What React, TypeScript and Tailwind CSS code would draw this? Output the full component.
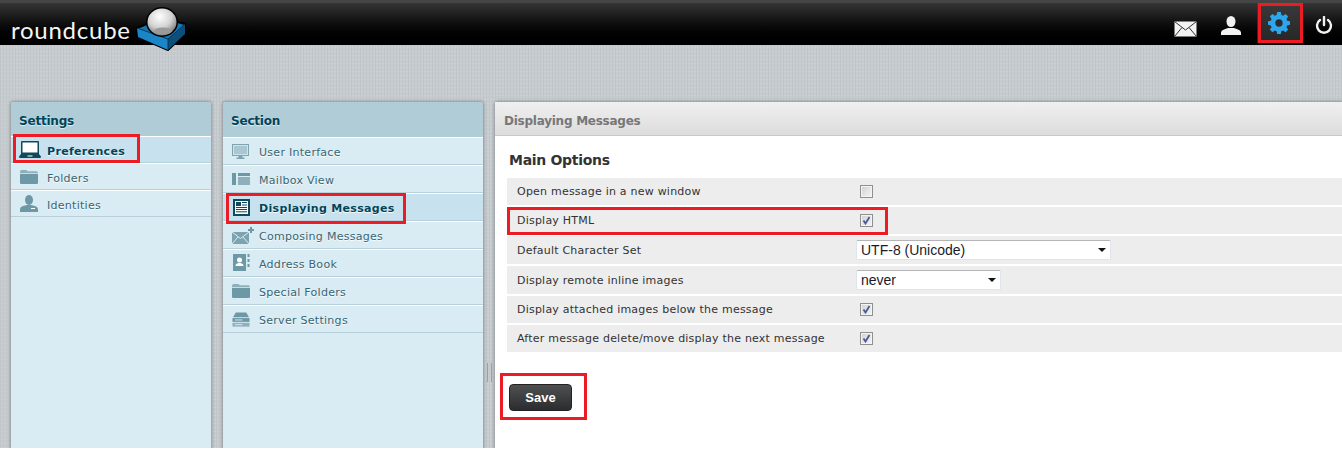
import React from 'react';

const verdana = "font-['DejaVu_Sans',sans-serif]";

const Folder: React.FC<{ className?: string }> = ({ className }) => (
    <svg width="18" height="14" viewBox="0 0 22 17" preserveAspectRatio="none" className={className}>
        <path d="M0 4V2Q0 0 2 0H8l1.500 1.500H20Q22 1.500 22 4Z" fill="#8fb0bb" />
        <path d="M0 5h22v10.500q0 1.500-1.500 1.500H1.500Q0 17 0 15.500Z" fill="#6d98a6" />
    </svg>
);

const settingsIcons: Record<string, React.ReactNode> = {
    Preferences: (
        <svg width="22" height="17" viewBox="0 0 22 17">
            <path d="M3 0h16q1 0 1 1v12H2V1q0-1 1-1Z" fill="#0f4a5c" />
            <rect x="3.500" y="1.500" width="15" height="10" fill="#fff" />
            <path d="M2 13h18l2 2.500q0 1.500-1 1.500H1q-1 0-1-1.500Z" fill="#0f4a5c" />
            <rect x="8.500" y="14.500" width="5" height="1" fill="#fff" />
        </svg>
    ),
    Folders: <Folder className="ml-[1px]" />,
    Identities: (
        <svg width="18" height="17" viewBox="0 0 18 17" className="ml-[1px]">
            <ellipse cx="9" cy="5" rx="4" ry="5" fill="#6d98a6" />
            <path d="M0 17v-3q0-2 3-3l4-1h4l4 1q3 1 3 3v3Z" fill="#6d98a6" />
            <rect x="11" y="13" width="4" height="1" fill="#fff" />
        </svg>
    ),
};

const sectionIcons: Record<string, React.ReactNode> = {
    'User Interface': (
        <svg width="17" height="15" viewBox="0 0 17 15">
            <rect x="0.500" y="0.500" width="16" height="11" fill="#cfe3ea" stroke="#7fa4b1" />
            <rect x="2" y="2" width="13" height="8" fill="#a9c6d1" />
            <path d="M6.500 12h4v1.500h2V15h-8v-1.500h2Z" fill="#7fa4b1" />
        </svg>
    ),
    'Mailbox View': (
        <svg width="18" height="12" viewBox="0 0 18 12">
            <rect x="0" y="0" width="4" height="12" fill="#6d98a6" />
            <rect x="6" y="0" width="12" height="3" fill="#6d98a6" />
            <rect x="6" y="4" width="12" height="8" fill="#8db0bc" />
        </svg>
    ),
    'Displaying Messages': (
        <svg width="17" height="17" viewBox="0 0 17 17" className="ml-[1px]">
            <rect width="17" height="17" fill="#0f4a5c" />
            <rect x="2" y="2" width="13" height="13" fill="#fff" />
            <rect x="3" y="3" width="5" height="4" fill="#0f4a5c" />
            <path d="M9 3.500h5M9 6h5M3 8.500h11M3 10.500h11M3 12.800h11" stroke="#0f4a5c" strokeWidth="1" />
        </svg>
    ),
    'Composing Messages': (
        <svg width="23" height="17" viewBox="0 0 23 17">
            <path d="M0 5h17v12H0Z" fill="#7ea3b0" />
            <path d="M0 5l8.500 6.500L17 5M0 17l6-7M17 17l-6-7" fill="none" stroke="#d9ebf3" strokeWidth="1" />
            <path d="M19 0v6M16 3h6" stroke="#6d98a6" strokeWidth="2" />
        </svg>
    ),
    'Address Book': (
        <svg width="17" height="18" viewBox="0 0 17 18" className="ml-[1px]">
            <rect width="13" height="17" fill="#6d98a6" />
            <circle cx="6.500" cy="6" r="2.500" fill="#fff" />
            <path d="M2.500 12q0-2.500 3-3h2q3 .5 3 3Z" fill="#fff" />
            <path d="M15.500 0v3M15.500 5v3M15.500 10v3" stroke="#6d98a6" strokeWidth="2" />
        </svg>
    ),
    'Special Folders': <Folder />,
    'Server Settings': (
        <svg width="18" height="15" viewBox="0 0 19 15">
            <path d="M4 0h11l3 5H1Z" fill="#6d98a6" />
            <rect x="0.500" y="6" width="18" height="4" fill="#6d98a6" />
            <rect x="0.500" y="11" width="18" height="4" fill="#8db0bc" />
            <path d="M3 8h8M3 13h8" stroke="#d9ebf3" strokeWidth="1" />
        </svg>
    ),
};

const MenuRow: React.FC<{ label: string; icon: React.ReactNode; selected?: boolean; height: string; iconBox: string; textPad: string }> = ({
    label,
    icon,
    selected,
    height,
    iconBox,
    textPad,
}) => (
    <div
        className={`flex items-center border-b border-b-[#b7d0da] border-t border-t-white ${height} ${
            selected ? 'bg-[#c7e2ee] font-bold tracking-[0.33px] text-[#004458]' : 'tracking-[0.28px] text-[#376572]'
        }`}
    >
        <div className={`flex w-[36px] shrink-0 items-center ${iconBox}`}>{icon}</div>
        <span className={`text-[11px] leading-none [text-shadow:0_1px_1px_#fff] ${textPad}`}>{label}</span>
    </div>
);

const Panel: React.FC<{ title: string; className: string; headerH: string; children: React.ReactNode }> = ({
    title,
    className,
    headerH,
    children,
}) => (
    <div className={`h-full shrink-0 rounded-t-[3px] bg-[#d9ebf3] shadow-[0_0_3px_1px_#8f9598] ${className}`}>
        <div
            className={`flex items-center rounded-t-[3px] bg-[#b0ccd7] pl-2 text-[12px] font-bold tracking-[-0.2px] text-[#004458] [text-shadow:0_1px_1px_#e4f0f5] ${headerH}`}
        >
            {title}
        </div>
        {children}
    </div>
);

const Checkbox: React.FC<{ checked?: boolean }> = ({ checked }) => (
    <div className="flex h-[13px] w-[13px] items-center justify-center border border-[#8e8f8f] bg-gradient-to-br from-[#d0d0d0] to-[#f6f6f6] shadow-[inset_0_0_0_1px_#f4f4f4]">
        {checked && (
            <svg width="9" height="9" viewBox="0 0 9 9">
                <path d="M1.500 4.500L3.500 7.500L7.500 1" fill="none" stroke="#4a5a94" strokeWidth="1.800" />
            </svg>
        )}
    </div>
);

const Select: React.FC<{ value: string; width: string }> = ({ value, width }) => (
    <div
        className={`flex h-[20px] items-center justify-between rounded-[2px] border border-t-[#b5b5b5] border-x-[#dfe3ea] border-b-[#dfe3ea] bg-white pl-[4px] pr-[3px] font-['Liberation_Sans',sans-serif] text-[14px] text-[#1a1a2a] ${width}`}
    >
        <span>{value}</span>
        <svg width="8" height="4" viewBox="0 0 8 4" className="mr-[1px]">
            <path d="M0 0h8L4 4Z" fill="#111" />
        </svg>
    </div>
);

const OptionRow: React.FC<{ label: string; height: string; children: React.ReactNode }> = ({ label, height, children }) => (
    <div className={`flex items-center bg-[#ededed] ${height}`}>
        <span className="w-[349px] shrink-0 pl-[10px] pt-[2px] text-[11px] tracking-[0.22px] text-[#333]">{label}</span>
        {children}
    </div>
);

const Logo: React.FC = () => (
    <div className="flex h-[42px] items-start self-start pl-[11px]">
        <span className="mt-[10px] w-[124px] shrink-0 font-['Lato',sans-serif] text-[24px] font-normal leading-[34px] tracking-[0.75px] text-[#f4f4f4]">
            roundcube
        </span>
        <svg width="52" height="50" viewBox="0 0 52 50" className="mt-[2px] shrink-0">
            <defs>
                <radialGradient id="ball" cx="0.42" cy="0.3" r="0.75">
                    <stop offset="0" stopColor="#ffffff" />
                    <stop offset="0.55" stopColor="#d2d2d2" />
                    <stop offset="1" stopColor="#6f6f6f" />
                </radialGradient>
            </defs>
            <path d="M2 23L27 13L50 19V29L33 45L3 32Z" fill="#1478b8" stroke="#000" strokeWidth="2" strokeLinejoin="round" />
            <path d="M2 23L33 34L33 45L3 32Z" fill="#1a86c8" />
            <path d="M33 34L50 19V29L33 45Z" fill="#0c4f7d" />
            <path d="M33 34L50 19M33 34V45M2 23L33 34" fill="none" stroke="#06263c" strokeWidth="0.800" />
            <ellipse cx="27" cy="17" rx="16" ry="15" fill="#000" />
            <ellipse cx="27" cy="17" rx="14.500" ry="13.500" fill="url(#ball)" />
            <ellipse cx="28" cy="26" rx="9" ry="3.500" fill="#9a9a9a" />
        </svg>
    </div>
);

const HeaderIcons: React.FC = () => (
    <div className="flex items-center self-start">
        <svg width="23" height="16" viewBox="0 0 23 16" className="mr-[24px] mt-[12px]">
            <rect x="0.500" y="0.500" width="22" height="15" fill="#f2f2f2" />
            <path d="M0.500 0.500L11.500 9L22.500 0.500M0.500 15.500L8 6.500M22.500 15.500L15 6.500" fill="none" stroke="#333" strokeWidth="1" />
        </svg>
        <svg width="20" height="19" viewBox="0 0 20 19" className="mr-[16px] mt-[4px]">
            <ellipse cx="10" cy="5.500" rx="4.500" ry="5.500" fill="#f2f2f2" />
            <path d="M0 19v-2.500q0-2 3-3l4-1.500h6l4 1.500q3 1 3 3V19Z" fill="#f2f2f2" />
        </svg>
        <div className="flex h-[40px] w-[45px] items-center justify-center bg-gradient-to-b from-[#3a3a3a] to-[#262626] pr-[2px]">
            <svg width="22" height="22" viewBox="0 0 24 24">
                <path
                    d="M10 0h4l.6 3.200 1.900.8 2.700-1.900 2.800 2.800-1.900 2.700.8 1.900L24 10v4l-3.100.6-.8 1.900 1.900 2.700-2.800 2.800-2.700-1.900-1.900.8L14 24h-4l-.6-3.100-1.900-.8-2.700 1.900L2 19.200l1.900-2.700-.8-1.900L0 14v-4l3.100-.5.8-1.900L2 4.900l2.800-2.800 2.700 1.900 1.900-.8Z"
                    fill="#2ea6ee"
                />
                <circle cx="12" cy="12" r="4" fill="#2c2c2c" />
            </svg>
        </div>
        <svg width="18" height="18" viewBox="0 0 18 18" className="ml-[13px] mr-[9px] mt-[3px]">
            <path d="M5 4a7 7 0 1 0 8 0" fill="none" stroke="#f2f2f2" strokeWidth="2.400" strokeLinecap="round" />
            <path d="M9 1v8" stroke="#f2f2f2" strokeWidth="2.400" strokeLinecap="round" />
        </svg>
    </div>
);

const App: React.FC = () => {
    const redBox = 'pointer-events-none absolute border-[3px] border-[#ed1c24]';

    return (
        <div className={`relative h-[460px] w-[1342px] overflow-hidden bg-white ${verdana}`}>
            <header className="relative z-10 flex h-[45px] items-center justify-between border-t-[3px] border-t-[#454545] bg-gradient-to-b from-[#353535] to-black">
                <Logo />
                <HeaderIcons />
            </header>

            <main className="flex h-[403px] gap-[12px] overflow-hidden bg-[#c5cbce] bg-[repeating-linear-gradient(90deg,#c0c6c9_0_1px,transparent_1px_3px),repeating-linear-gradient(0deg,#cbd1d4_0_1px,transparent_1px_4px)] pl-[11px] pt-[57px]">
                <Panel title="Settings" className="w-[200px]" headerH="h-[34px] pl-[8px] pt-[4px]">
                    {['Preferences', 'Folders', 'Identities'].map((name) => (
                        <MenuRow
                            key={name}
                            label={name}
                            icon={settingsIcons[name]}
                            selected={name === 'Preferences'}
                            height="h-[27px]"
                            iconBox="pl-[8px]"
                            textPad="pt-[4px]"
                        />
                    ))}
                </Panel>

                <Panel title="Section" className="w-[260px]" headerH="h-[35px] pt-[2px]">
                    {Object.keys(sectionIcons).map((name) => (
                        <MenuRow
                            key={name}
                            label={name}
                            icon={sectionIcons[name]}
                            selected={name === 'Displaying Messages'}
                            height="h-[28px]"
                            iconBox="pl-[9px]"
                            textPad="pt-[2px]"
                        />
                    ))}
                </Panel>

                <section className="h-full flex-1 rounded-tl-[3px] bg-white shadow-[0_0_3px_1px_#8f9598]">
                    <div className="flex h-[34px] items-center border-b border-b-[#c8c8c8] bg-gradient-to-b from-[#f0f0f0] to-[#dcdcdc] pl-[9px] pt-[4px] text-[12px] font-bold tracking-[-0.25px] text-[#777]">
                        Displaying Messages
                    </div>
                    <div className="pl-[12px]">
                        <h2 className="pl-[2px] pt-[15px] text-[14px] font-bold leading-[18px] tracking-[-0.3px] text-[#333]">Main Options</h2>
                        <div className="mt-[9px] flex flex-col gap-[2px]">
                            <OptionRow label="Open message in a new window" height="h-[27px]">
                                <div className="pl-[4px]"><Checkbox /></div>
                            </OptionRow>
                            <OptionRow label="Display HTML" height="h-[27px]">
                                <div className="pl-[4px]"><Checkbox checked /></div>
                            </OptionRow>
                            <OptionRow label="Default Character Set" height="h-[28px]">
                                <Select value="UTF-8 (Unicode)" width="w-[255px]" />
                            </OptionRow>
                            <OptionRow label="Display remote inline images" height="h-[28px]">
                                <Select value="never" width="w-[145px]" />
                            </OptionRow>
                            <OptionRow label="Display attached images below the message" height="h-[27px]">
                                <div className="pl-[4px]"><Checkbox checked /></div>
                            </OptionRow>
                            <OptionRow label="After message delete/move display the next message" height="h-[27px]">
                                <div className="pl-[4px]"><Checkbox checked /></div>
                            </OptionRow>
                        </div>
                        <button className="ml-[2px] mt-[32px] h-[27px] w-[63px] rounded-[4px] border border-[#222] bg-gradient-to-b from-[#505050] to-[#2a2d30] font-['Liberation_Sans',sans-serif] text-[13px] font-bold text-white">
                            Save
                        </button>
                    </div>
                </section>
            </main>

            {/* splitter grip */}
            <div className="absolute left-[487px] top-[363px] h-[19px] w-[5px] border-x border-x-[#9aa0a3]" />

            {/* red annotation boxes */}
            <div className={`${redBox} z-20 left-[1258px] top-[3px] h-[40px] w-[45px]`} />
            <div className={`${redBox} left-[13px] top-[134px] h-[29px] w-[127px]`} />
            <div className={`${redBox} left-[226px] top-[193px] h-[31px] w-[180px]`} />
            <div className={`${redBox} left-[507px] top-[207px] h-[28px] w-[381px]`} />
            <div className={`${redBox} left-[500px] top-[373px] h-[47px] w-[87px]`} />
        </div>
    );
};

export default App;
